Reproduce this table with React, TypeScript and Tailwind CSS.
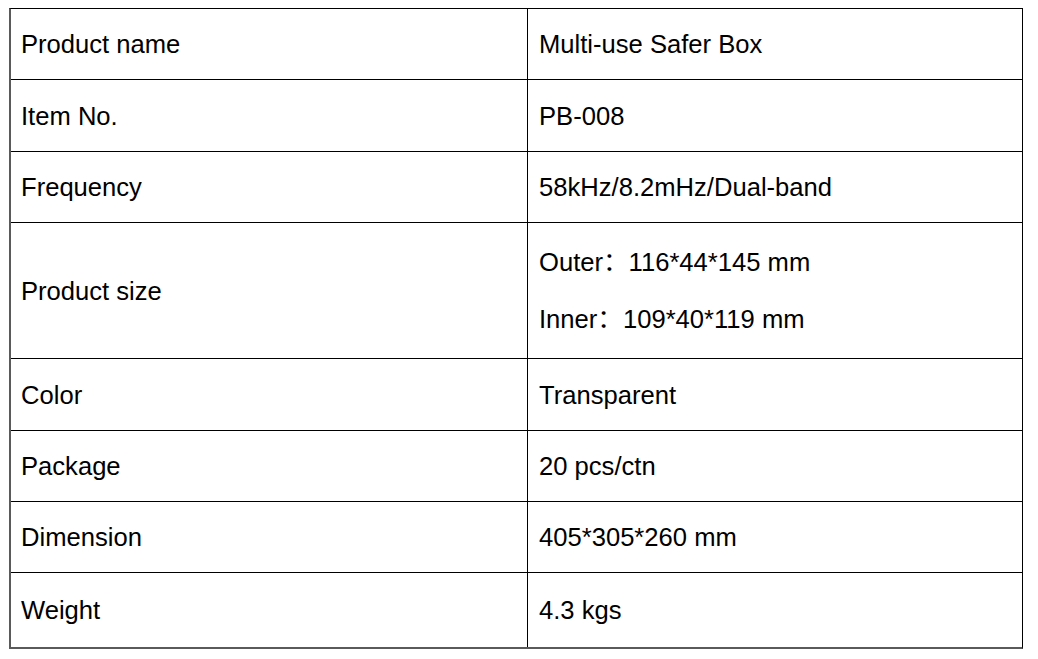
import React from "react";

const rows: { label: string; value: React.ReactNode; h: string }[] = [
  { label: "Product name", value: "Multi-use Safer Box", h: "h-[71px]" },
  { label: "Item No.", value: "PB-008", h: "h-[72px]" },
  { label: "Frequency", value: "58kHz/8.2mHz/Dual-band", h: "h-[71px]" },
  {
    label: "Product size",
    value: (
      <div className="flex flex-col gap-[31px]">
        <span>Outer：116*44*145 mm</span>
        <span>Inner：109*40*119 mm</span>
      </div>
    ),
    h: "h-[136px]",
  },
  { label: "Color", value: "Transparent", h: "h-[72px]" },
  { label: "Package", value: "20 pcs/ctn", h: "h-[71px]" },
  { label: "Dimension", value: "405*305*260 mm", h: "h-[71px]" },
  { label: "Weight", value: "4.3 kgs", h: "h-[74px]" },
];

export default function App() {
  return (
    <div className="w-[1038px] h-[659px] bg-white pt-[8px] pl-[9px]" style={{ fontFamily: '"Liberation Sans", Arial, "Noto Sans CJK SC", sans-serif' }}>
      <div className="w-[1014px] border-t border-t-black border-l-2 border-l-[#5a5a5a] border-r border-r-black border-b-2 border-b-[#5a5a5a] text-[25.6px] leading-[26px] text-black">
        {rows.map((r, i) => (
          <div key={i} className={`flex ${r.h} ${i < rows.length - 1 ? "border-b border-b-black" : ""}`}>
            <div className="w-[517px] border-r border-r-black flex items-center pl-[10px]">{r.label}</div>
            <div className="flex-1 flex items-center pl-[11px]">{r.value}</div>
          </div>
        ))}
      </div>
    </div>
  );
}
